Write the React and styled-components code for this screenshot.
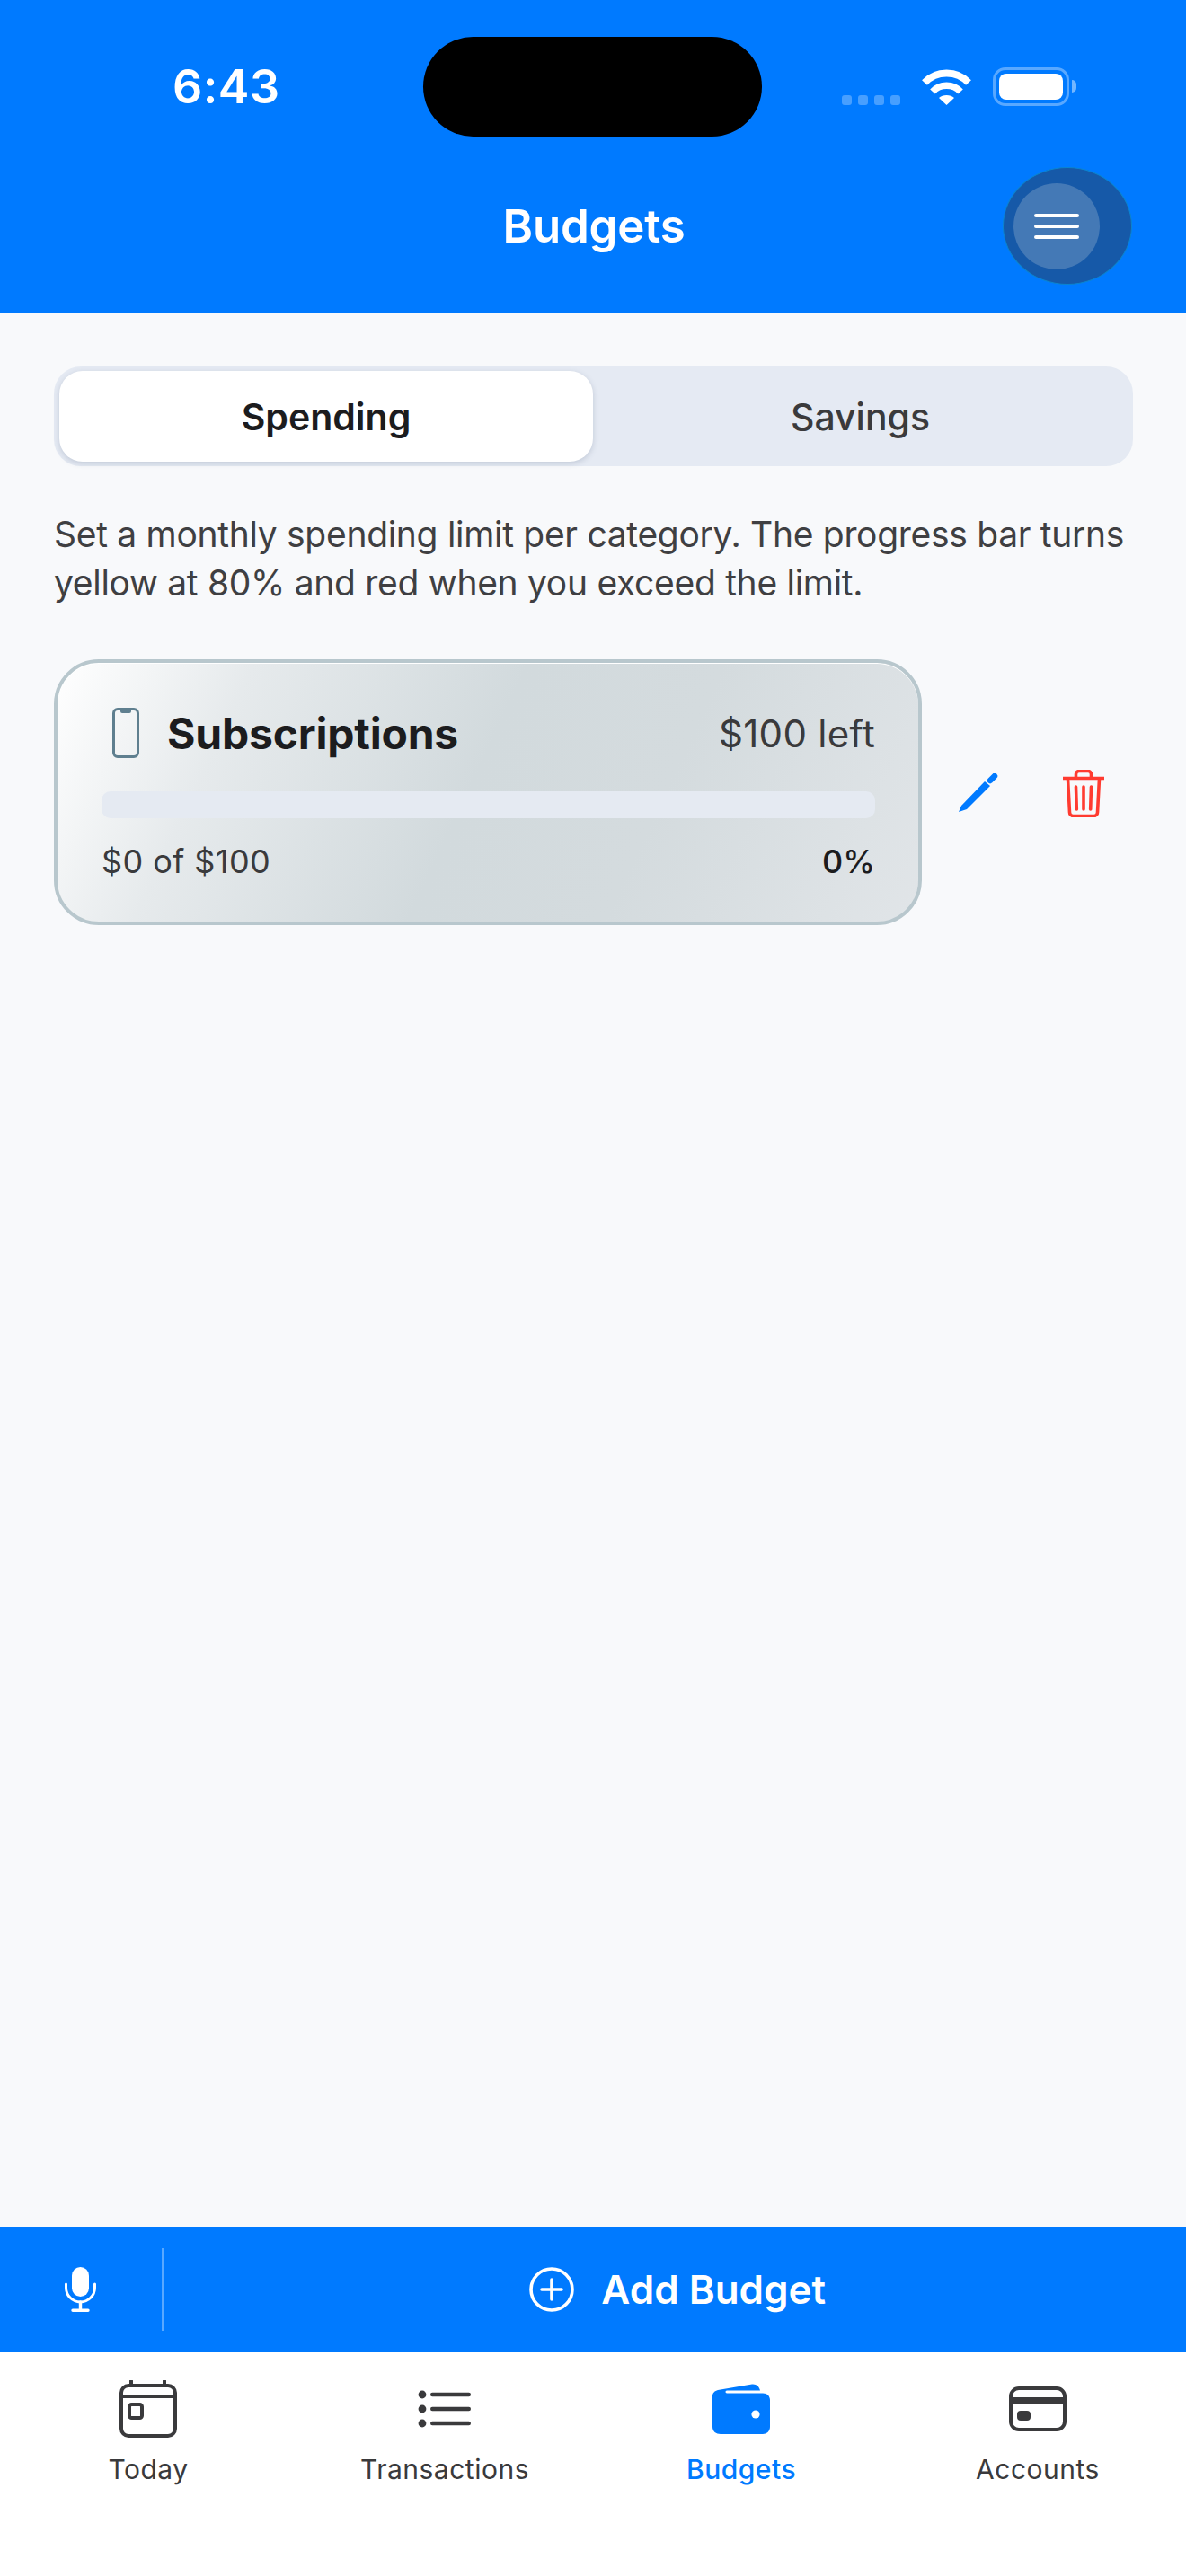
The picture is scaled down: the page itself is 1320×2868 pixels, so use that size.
import React from 'react';
import styled, { createGlobalStyle } from 'styled-components';

const GlobalStyle = createGlobalStyle`
  html, body { margin: 0; padding: 0; background: #f8f9fb; }
  * { box-sizing: border-box; }
  body { font-family: Inter, "Liberation Sans", sans-serif; }
`;

const blue = '#007aff';

const Screen = styled.div`
  width: 1320px;
  height: 2868px;
  display: flex;
  flex-direction: column;
  overflow: hidden;
  background: #f8f9fb;
`;

const Header = styled.header`
  height: 348px;
  flex: none;
  background: ${blue};
  color: #fff;
  padding-top: 41px;
`;

const StatusBar = styled.div`
  display: grid;
  grid-template-columns: 471px 377px 1fr;
  height: 111px;
`;

const Time = styled.div`
  font-size: 52px;
  font-weight: 600;
  line-height: 111px;
  padding-left: 192px;
  letter-spacing: 0.5px;
`;

const Island = styled.div`
  background: #000;
  border-radius: 56px;
`;

const StatusIcons = styled.div`
  display: flex;
  align-items: flex-start;
  padding: 34px 0 0 89px;
`;

const SignalDots = styled.div`
  display: flex;
  gap: 7px;
  margin-top: 31px;
  margin-right: 23px;
`;

const SignalDot = styled.span`
  width: 11px;
  height: 11px;
  border-radius: 3px;
  background: rgba(255, 255, 255, 0.28);
`;

const Battery = styled.div`
  width: 85px;
  height: 43px;
  margin-left: 23px;
  padding: 4px;
  border: 3.5px solid rgba(255, 255, 255, 0.35);
  border-radius: 14px;
  position: relative;
  &::after {
    content: '';
    position: absolute;
    right: -11px;
    top: 11px;
    width: 5px;
    height: 14px;
    border-radius: 0 5px 5px 0;
    background: rgba(255, 255, 255, 0.45);
  }
`;

const BatteryFill = styled.div`
  height: 100%;
  background: #fff;
  border-radius: 8px;
`;

const NavRow = styled.div`
  display: grid;
  grid-template-columns: 1fr 144px;
  margin: 34px 60px 0 0;
  height: 131px;
  align-items: center;
`;

const Title = styled.h1`
  margin: 0;
  padding-left: 206px;
  text-align: center;
  font-size: 51px;
  font-weight: 600;
  line-height: 1;
  letter-spacing: -0.2px;
`;

const MenuBlob = styled.button`
  width: 144px;
  height: 131px;
  padding: 0 0 0 11px;
  display: flex;
  align-items: center;
  border: 1.5px solid #0b85cf;
  border-radius: 50%;
  background: #1659a8;
`;

const MenuCircle = styled.div`
  width: 96px;
  height: 96px;
  border-radius: 50%;
  background: #4479b6;
  display: flex;
  flex-direction: column;
  align-items: center;
  justify-content: center;
  gap: 8px;
`;

const MenuLine = styled.span`
  width: 50px;
  height: 4px;
  border-radius: 2px;
  background: #fff;
`;

const Main = styled.main`
  flex: 1;
  padding: 60px 59px 0 60px;
  background: #f8f9fb;
`;

const Segments = styled.div`
  height: 111px;
  padding: 5px 6px;
  display: grid;
  grid-template-columns: 594px 1fr;
  border-radius: 30px;
  background: #e5eaf3;
`;

const Segment = styled.div`
  display: flex;
  align-items: center;
  justify-content: center;
  font-size: 41px;
  font-weight: ${p => (p.$active ? 600 : 500)};
  color: ${p => (p.$active ? '#1c1c1e' : '#3a3a3c')};
  background: ${p => (p.$active ? '#fff' : 'transparent')};
  border-radius: 26px;
  box-shadow: ${p => (p.$active ? '0 2px 6px rgba(70, 85, 120, 0.22)' : 'none')};
`;

const Help = styled.p`
  margin: 49px 0 0;
  font-size: 39px;
  line-height: 54px;
  letter-spacing: -0.3px;
  color: #3f3f42;
  white-space: nowrap;
`;

const BudgetRow = styled.div`
  display: flex;
  align-items: center;
  margin-top: 58px;
`;

const Card = styled.article`
  width: 966px;
  height: 296px;
  flex: none;
  padding: 46px 48px 0 49px;
  border: 4.5px solid #b8c7cd;
  border-radius: 50px;
  background: linear-gradient(115deg, #ffffff 0%, #e6eaec 20%, #d2dadd 48%, #d4dbde 68%, #e1e5e8 100%);
  box-shadow: inset 0 1px 0 #fff;
`;

const CardTop = styled.div`
  display: flex;
  align-items: center;
  height: 64px;
`;

const PhoneIcon = styled.svg`
  width: 30px;
  height: 56px;
  margin-left: 12px;
  flex: none;
`;

const CardName = styled.h2`
  flex: 1;
  margin: 0 0 0 31px;
  font-size: 48px;
  font-weight: 700;
  color: #1c1c1e;
  letter-spacing: -0.2px;
`;

const Left = styled.span`
  font-size: 42px;
  letter-spacing: 0.3px;
  color: #3a3a3c;
`;

const Track = styled.div`
  height: 30px;
  margin-top: 33px;
  border-radius: 10px;
  background: #e5eaf2;
`;

const CardBottom = styled.div`
  display: flex;
  justify-content: space-between;
  margin-top: 26px;
  font-size: 36px;
  line-height: 44px;
  letter-spacing: 0.4px;
  color: #3a3a3c;
`;

const Percent = styled.span`
  font-weight: 500;
  letter-spacing: 0;
  color: #1c1c1e;
`;

const Actions = styled.div`
  display: flex;
  align-items: center;
  margin-left: 41px;
  gap: 72px;
  margin-top: 2px;
`;

const ActionIcon = styled.svg`
  display: block;
  flex: none;
`;

const AddBar = styled.div`
  height: 140px;
  flex: none;
  display: flex;
  align-items: center;
  background: ${blue};
  color: #fff;
`;

const MicSlot = styled.div`
  width: 180px;
  height: 92px;
  flex: none;
  padding-left: 72px;
  display: flex;
  align-items: center;
`;

const Divider = styled.div`
  width: 2.5px;
  height: 92px;
  background: rgba(255, 255, 255, 0.35);
`;

const AddButton = styled.div`
  flex: 1;
  display: flex;
  align-items: center;
  justify-content: center;
  gap: 30px;
  padding-left: 6px;
  font-size: 44px;
  font-weight: 600;
`;

const TabBar = styled.nav`
  height: 249px;
  flex: none;
  display: grid;
  grid-template-columns: repeat(4, 1fr);
  background: #fff;
`;

const TabItem = styled.div`
  display: flex;
  flex-direction: column;
  align-items: center;
  padding-top: 30px;
  color: ${p => (p.$active ? blue : '#3a3a3c')};
  font-size: 30px;
  font-weight: ${p => (p.$active ? 500 : 400)};
`;

const TabIconBox = styled.div`
  height: 66px;
  display: flex;
  align-items: center;
  justify-content: center;
`;

const TabLabel = styled.span`
  margin-top: 16px;
  line-height: 36px;
  letter-spacing: 0.5px;
`;

const Wifi = () => (
  <svg width="57" height="43" viewBox="0 0 57 43" fill="none">
    <path d="M4 17C17 3 40 3 53 17" stroke="#fff" strokeWidth="8" />
    <path d="M13 27C21 18 36 18 44 27" stroke="#fff" strokeWidth="7.5" />
    <path d="M20 34C24 30 33 30 37 34L28.5 42Z" fill="#fff" />
  </svg>
);

const Phone = () => (
  <PhoneIcon viewBox="0 0 30 56" fill="none">
    <rect x="1.5" y="1.5" width="27" height="53" rx="4.5" stroke="#5f7f8f" strokeWidth="3" />
    <path d="M9 2h12v2a2 2 0 0 1-2 2h-8a2 2 0 0 1-2-2z" fill="#5f7f8f" />
  </PhoneIcon>
);

const Pencil = () => (
  <ActionIcon width="44" height="44" viewBox="0 0 44 44" fill={blue}>
    <path d="M0 43L3 36L29 9L35 14L9 40Z" />
    <path d="M35 8L40 3" stroke={blue} strokeWidth="6.5" strokeLinecap="round" />
  </ActionIcon>
);

const Trash = () => (
  <ActionIcon width="46" height="53" viewBox="0 0 46 53" fill="none" stroke="#ff3b30" strokeWidth="3.6">
    <path d="M0 9.5h46" />
    <path d="M14.5 8V5a3.5 3.5 0 0 1 3.5-3.5h10a3.5 3.5 0 0 1 3.5 3.5v3" />
    <path d="M5.5 10l2 37.5a4 4 0 0 0 4 4h23a4 4 0 0 0 4-4l2-37.5" />
    <path d="M14.5 19l.8 25M23 19v25M31.5 19l-.8 25" strokeLinecap="round" />
  </ActionIcon>
);

const Mic = () => (
  <svg width="35" height="50" viewBox="0 0 35 50" fill="none">
    <rect x="8" y="0" width="19" height="33" rx="9.5" fill="#fff" />
    <path d="M1.5 19v4a16 16 0 0 0 32 0v-4" stroke="#fff" strokeWidth="3" strokeLinecap="round" />
    <path d="M17.5 39v9M9 48.2h17" stroke="#fff" strokeWidth="3.4" strokeLinecap="round" />
  </svg>
);

const PlusCircle = () => (
  <svg width="50" height="50" viewBox="0 0 50 50" fill="none" stroke="#fff" strokeWidth="3.6">
    <circle cx="25" cy="25" r="23" />
    <path d="M14 25h22M25 14v22" strokeLinecap="round" />
  </svg>
);

const CalendarIcon = () => (
  <svg width="64" height="64" viewBox="0 0 64 64" fill="none" stroke="#3a3a3c" strokeWidth="4">
    <rect x="2" y="6" width="60" height="56" rx="8" />
    <path d="M2 18h60" />
    <path d="M13 1v5M50 1v5" strokeLinecap="round" />
    <rect x="11" y="27" width="14" height="15" rx="2.5" />
  </svg>
);

const ListIcon = () => (
  <svg width="60" height="42" viewBox="0 0 60 42" fill="#3a3a3c">
    <circle cx="5" cy="5" r="4.4" />
    <circle cx="5" cy="21" r="4.4" />
    <circle cx="5" cy="37" r="4.4" />
    <rect x="14" y="2.8" width="45" height="4.4" rx="2.2" />
    <rect x="14" y="18.8" width="45" height="4.4" rx="2.2" />
    <rect x="14" y="34.8" width="45" height="4.4" rx="2.2" />
  </svg>
);

const WalletIcon = () => (
  <svg width="64" height="56" viewBox="0 0 64 56" fill={blue}>
    <path d="M6 7L44 0.5C49 0 52 3 53 7.5H16C14 7.5 14 10.5 16 10.5H56C61 10.5 64 14 64 18V48C64 53 60 56 56 56H9C4 56 0 53 0 48V14C0 10 2.5 8 6 7Z" />
    <circle cx="48" cy="34" r="4.6" fill="#fff" />
  </svg>
);

const CreditIcon = () => (
  <svg width="64" height="50" viewBox="0 0 64 50" fill="none">
    <rect x="2" y="2" width="60" height="46" rx="9" stroke="#3a3a3c" strokeWidth="4" />
    <rect x="2" y="12" width="60" height="8" fill="#3a3a3c" />
    <rect x="9" y="27" width="15" height="11" rx="4" fill="#3a3a3c" />
  </svg>
);

const tabs = [
  { label: 'Today', Icon: CalendarIcon },
  { label: 'Transactions', Icon: ListIcon },
  { label: 'Budgets', Icon: WalletIcon, active: true },
  { label: 'Accounts', Icon: CreditIcon },
];

export default function App() {
  return (
    <>
      <GlobalStyle />
      <Screen>
        <Header>
          <StatusBar>
            <Time>6:43</Time>
            <Island />
            <StatusIcons>
              <SignalDots>
                <SignalDot />
                <SignalDot />
                <SignalDot />
                <SignalDot />
              </SignalDots>
              <Wifi />
              <Battery>
                <BatteryFill />
              </Battery>
            </StatusIcons>
          </StatusBar>
          <NavRow>
            <Title>Budgets</Title>
            <MenuBlob>
              <MenuCircle>
                <MenuLine />
                <MenuLine />
                <MenuLine />
              </MenuCircle>
            </MenuBlob>
          </NavRow>
        </Header>
        <Main>
          <Segments>
            <Segment $active>Spending</Segment>
            <Segment>Savings</Segment>
          </Segments>
          <Help>
            Set a monthly spending limit per category. The progress bar turns
            <br />
            yellow at 80% and red when you exceed the limit.
          </Help>
          <BudgetRow>
            <Card>
              <CardTop>
                <Phone />
                <CardName>Subscriptions</CardName>
                <Left>$100 left</Left>
              </CardTop>
              <Track />
              <CardBottom>
                <span>$0 of $100</span>
                <Percent>0%</Percent>
              </CardBottom>
            </Card>
            <Actions>
              <Pencil />
              <Trash />
            </Actions>
          </BudgetRow>
        </Main>
        <AddBar>
          <MicSlot>
            <Mic />
          </MicSlot>
          <Divider />
          <AddButton>
            <PlusCircle />
            Add Budget
          </AddButton>
        </AddBar>
        <TabBar>
          {tabs.map(({ label, Icon, active }) => (
            <TabItem key={label} $active={active}>
              <TabIconBox>
                <Icon />
              </TabIconBox>
              <TabLabel>{label}</TabLabel>
            </TabItem>
          ))}
        </TabBar>
      </Screen>
    </>
  );
}
